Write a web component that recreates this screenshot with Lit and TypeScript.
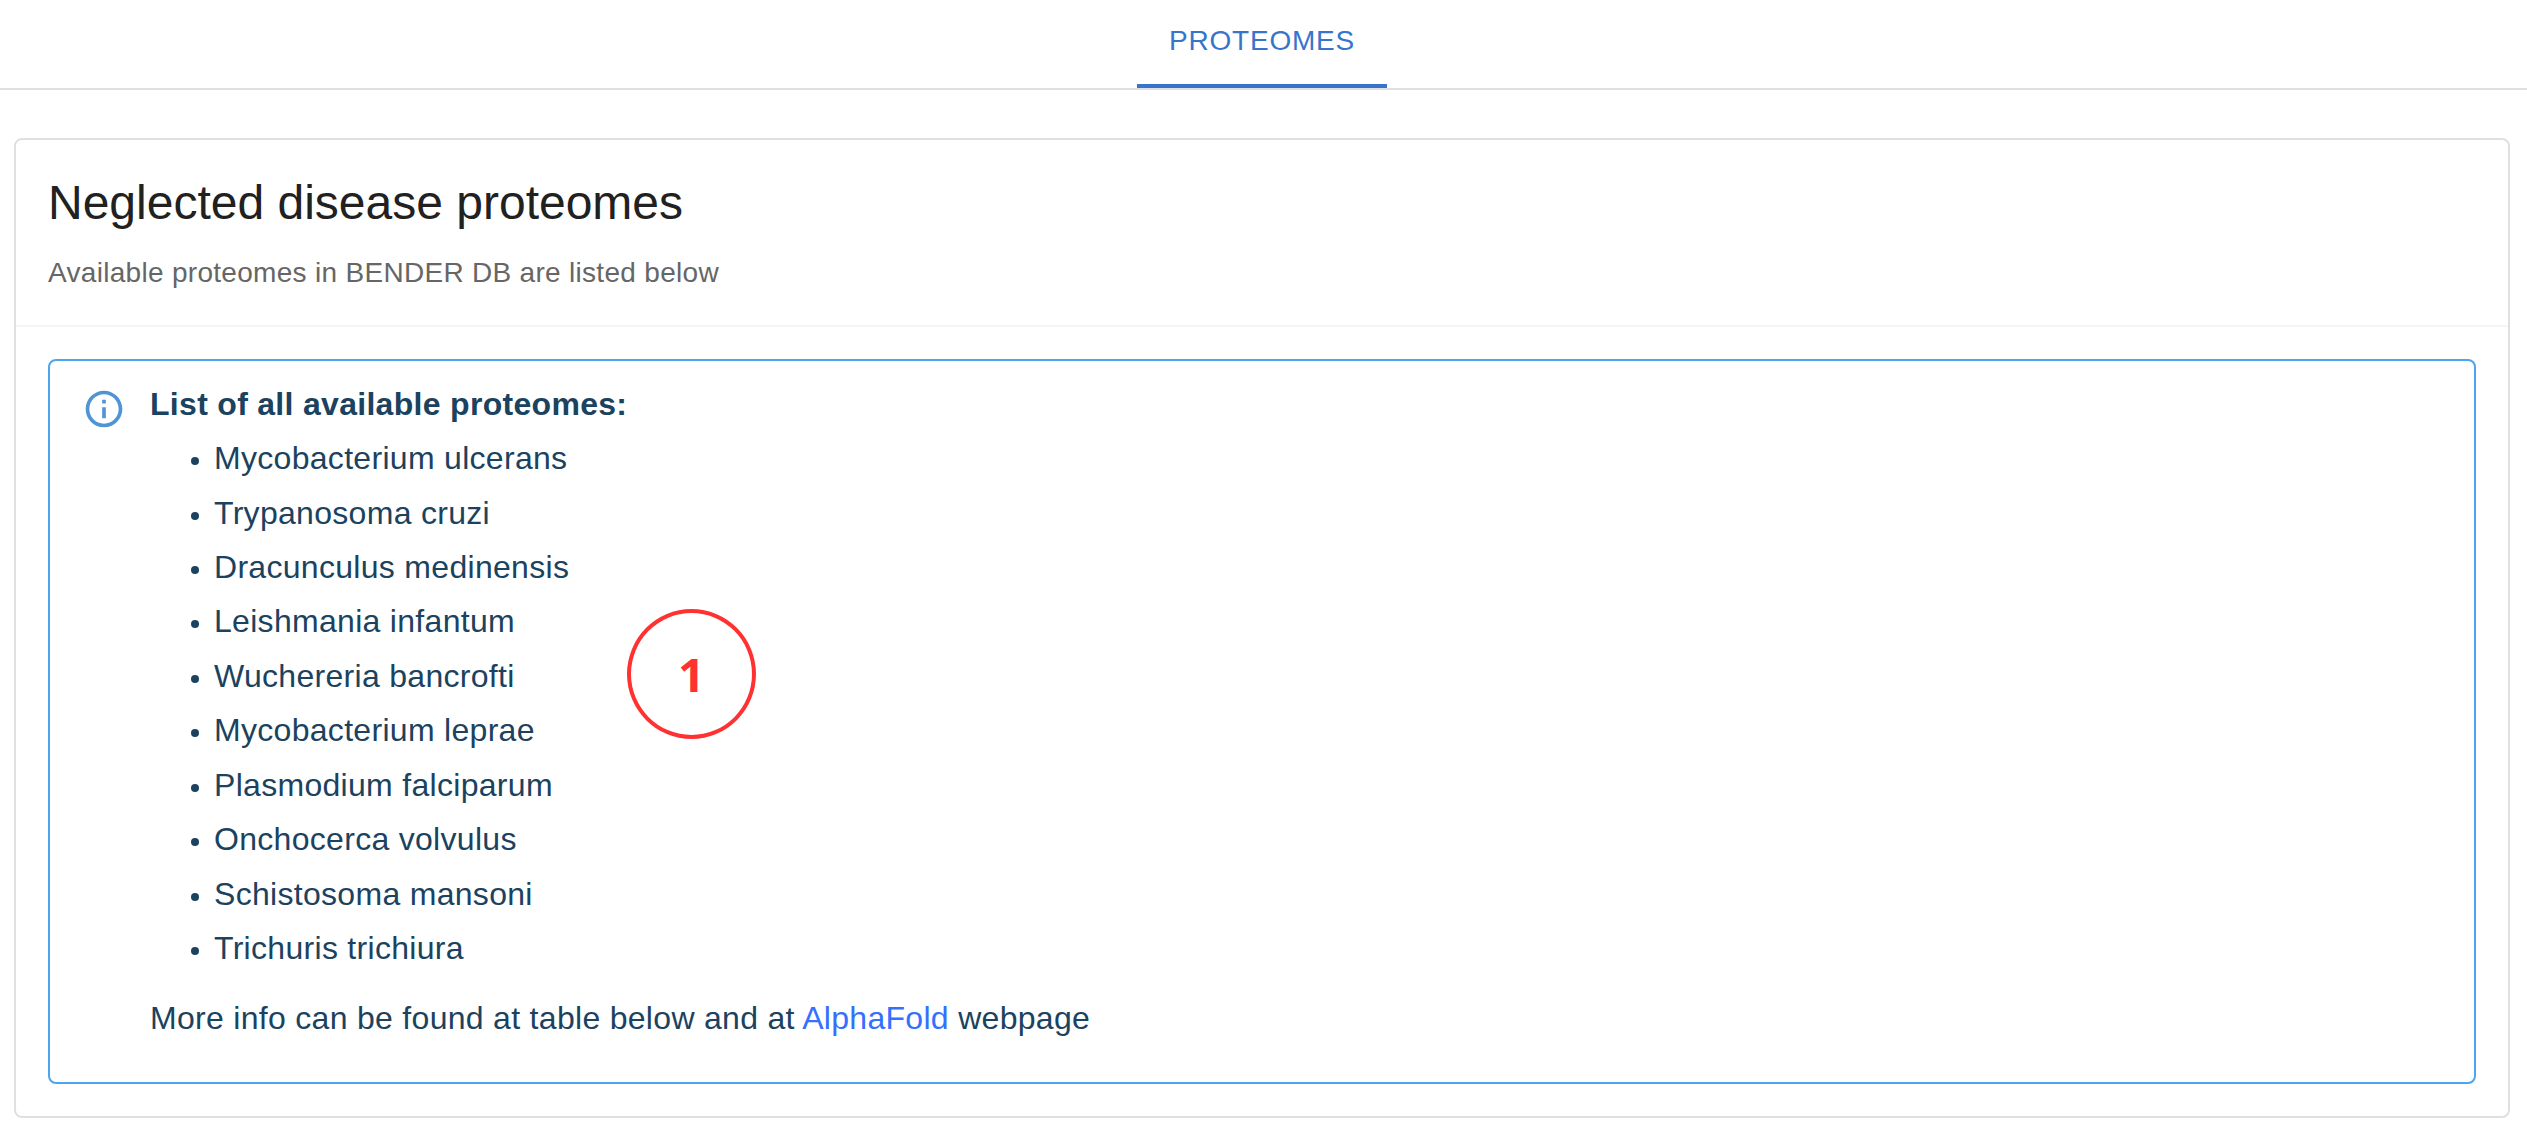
import { LitElement, html, css } from "lit";
import { customElement } from "lit/decorators.js";

const PROTEOMES = [
  "Mycobacterium ulcerans",
  "Trypanosoma cruzi",
  "Dracunculus medinensis",
  "Leishmania infantum",
  "Wuchereria bancrofti",
  "Mycobacterium leprae",
  "Plasmodium falciparum",
  "Onchocerca volvulus",
  "Schistosoma mansoni",
  "Trichuris trichiura",
];

@customElement("app-root")
export class AppRoot extends LitElement {
  static styles = css`
    :host {
      display: block;
      min-height: 100vh;
      box-sizing: border-box;
      background: #fff;
      font-family: "Liberation Sans", Arial, sans-serif;
      color: #212121;
    }
    .tabs {
      display: flex;
      justify-content: center;
      height: 88px;
      padding-right: 3px;
      border-bottom: 2px solid #e0e0e0;
    }
    .tab {
      box-sizing: border-box;
      width: 250px;
      height: 88px;
      padding: 0 0 2px;
      border: 0;
      border-bottom: 4px solid #3874cb;
      background: none;
      color: #3874cb;
      font: 28px/40px "Liberation Sans", Arial, sans-serif;
      letter-spacing: 0.8px;
      text-align: center;
      display: block;
    }
    .card {
      margin: 48px 17px 0 14px;
      border: 2px solid #e0e0e0;
      border-radius: 8px;
    }
    .header {
      padding: 32px 32px 31px;
      border-bottom: 2px solid #f5f5f5;
    }
    .title {
      margin: 0 0 19px;
      font-size: 48px;
      font-weight: 400;
      line-height: 61px;
    }
    .subtitle {
      margin: 0;
      color: #666;
      font-size: 28px;
      line-height: 42px;
      letter-spacing: 0.3px;
    }
    .content {
      padding: 32px;
    }
    .alert {
      position: relative;
      display: flex;
      gap: 24px;
      box-sizing: border-box;
      height: 725px;
      padding: 15.85px 32px 0;
      border: 2px solid #4ba5ef;
      border-radius: 8px;
      color: #1b425e;
      font-size: 32px;
      line-height: 54.4px;
      letter-spacing: 0.3px;
    }
    .icon {
      flex: none;
      width: 44px;
      height: 44px;
      margin-top: 10px;
      fill: #4f94d4;
    }
    .heading {
      margin: 0;
      font-size: inherit;
      font-weight: 700;
    }
    .list {
      margin: 0;
      padding-left: 41px;
      list-style: none;
    }
    .item::before {
      content: "";
      display: inline-block;
      width: 8px;
      height: 8px;
      margin-right: 15px;
      border-radius: 50%;
      background: currentColor;
      vertical-align: 4px;
    }
    .more {
      margin: 16px 0 0;
    }
    .link {
      color: #3370ff;
      text-decoration: none;
    }
    .callout {
      position: absolute;
      left: 577px;
      top: 248px;
      box-sizing: border-box;
      width: 129px;
      height: 130px;
      border: 4px solid #ff3131;
      border-radius: 50%;
      color: #ff3131;
      font: 700 47px/122px "Open Sans", sans-serif;
      text-align: center;
    }
  `;

  render() {
    return html`
      <nav class="tabs"><button class="tab">PROTEOMES</button></nav>
      <section class="card">
        <header class="header">
          <h1 class="title">Neglected disease proteomes</h1>
          <p class="subtitle">Available proteomes in BENDER DB are listed below</p>
        </header>
        <div class="content">
          <div class="alert">
            <svg class="icon" viewBox="0 0 24 24">
              <path d="M11 7h2v2h-2zM11 11h2v6h-2zM12 2C6.48 2 2 6.48 2 12s4.48 10 10 10 10-4.48 10-10S17.52 2 12 2zm0 18c-4.41 0-8-3.59-8-8s3.59-8 8-8 8 3.59 8 8-3.59 8-8 8z"/>
            </svg>
            <div>
              <h2 class="heading">List of all available proteomes:</h2>
              <ul class="list">
                ${PROTEOMES.map((name) => html`<li class="item">${name}</li>`)}
              </ul>
              <p class="more">More info can be found at table below and at <a class="link" href="#">AlphaFold</a> webpage</p>
            </div>
            <span class="callout">1</span>
          </div>
        </div>
      </section>
    `;
  }
}
